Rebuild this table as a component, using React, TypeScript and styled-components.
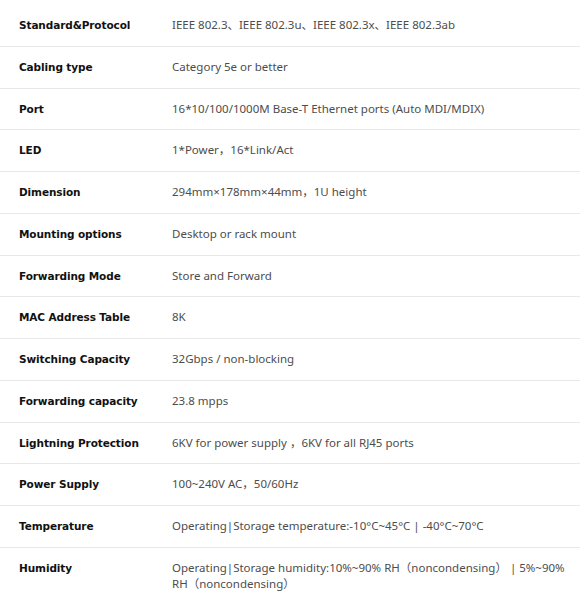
import styled, { createGlobalStyle } from 'styled-components';

const specs: [string, string][] = [
  ['Standard&Protocol', 'IEEE 802.3、IEEE 802.3u、IEEE 802.3x、IEEE 802.3ab'],
  ['Cabling type', 'Category 5e or better'],
  ['Port', '16*10/100/1000M Base-T Ethernet ports (Auto MDI/MDIX)'],
  ['LED', '1*Power，16*Link/Act'],
  ['Dimension', '294mm×178mm×44mm，1U height'],
  ['Mounting options', 'Desktop or rack mount'],
  ['Forwarding Mode', 'Store and Forward'],
  ['MAC Address Table', '8K'],
  ['Switching Capacity', '32Gbps / non-blocking'],
  ['Forwarding capacity', '23.8 mpps'],
  ['Lightning Protection', '6KV for power supply ，6KV for all RJ45 ports'],
  ['Power Supply', '100~240V AC，50/60Hz'],
  ['Temperature', 'Operating|Storage temperature:-10°C~45°C | -40°C~70°C'],
  ['Humidity', 'Operating|Storage humidity:10%~90% RH（noncondensing） | 5%~90% RH（noncondensing）'],
];

export default function App() {
  return (
    <>
      <GlobalStyle />
      <SpecTable>
        {specs.map(([label, value], i) => (
          <Row key={label} last={i === specs.length - 1}>
            <Label>{label}</Label>
            <Value>{value}</Value>
          </Row>
        ))}
      </SpecTable>
    </>
  );
}

const GlobalStyle = createGlobalStyle`
  body {
    margin: 0;
    background: #fff;
  }
`;

const SpecTable = styled.div`
  width: 582px;
  padding-top: 5px;
  display: flex;
  flex-direction: column;
`;

const Row = styled.div<{ last?: boolean }>`
  display: grid;
  grid-template-columns: 153px 1fr;
  align-items: start;
  padding: 12px 4px 12.77px 19px;
  margin-right: 2px;
  border-bottom: ${(p) => (p.last ? 'none' : '1px solid #e8e8e8')};
`;

const Label = styled.div`
  font-family: 'DejaVu Sans', sans-serif;
  font-weight: bold;
  font-size: 10.5px;
  letter-spacing: -0.1px;
  line-height: 16px;
  color: #111;
`;

const Value = styled.div`
  font-family: 'Noto Sans', 'Noto Sans CJK SC', sans-serif;
  font-size: 11.5px;
  line-height: 16px;
  color: #4d4d4d;
`;
